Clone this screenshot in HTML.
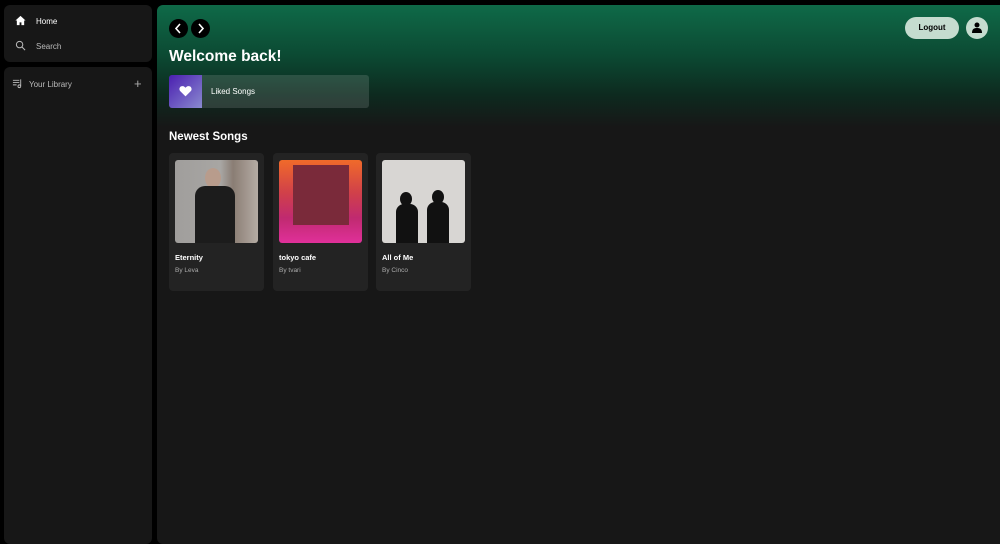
<!DOCTYPE html>
<html><head><style>
*{margin:0;padding:0;box-sizing:border-box}
body{width:1000px;height:544px;background:#000;font-family:"Liberation Sans",sans-serif;position:relative;overflow:hidden;color:#fff}
.box{position:absolute;background:#171717;border-radius:6px}
.nav{position:absolute;left:36px;font-size:8px;color:#fff}
.main{position:absolute;left:157px;top:5px;width:843px;height:539px;border-radius:6px 0 0 6px;background:linear-gradient(180deg,#0f6a48 0px,#0c4a33 50px,#0d2a1f 90px,#171717 122px,#171717 100%)}
.circ{position:absolute;width:19px;height:19px;border-radius:50%;background:#000}
.card{position:absolute;top:148px;width:95px;height:138px;background:#232323;border-radius:4px}
.img{position:absolute;left:6px;top:7px;width:83px;height:83px;border-radius:3px;overflow:hidden}
.t{position:absolute;left:6px;top:100px;font-size:7.5px;font-weight:bold}
.s{position:absolute;left:6px;top:114px;font-size:6.5px;color:#aaa}
</style></head><body>
<div class="box" style="left:4px;top:5px;width:148px;height:57px"></div>
<svg style="position:absolute;left:15px;top:15px" width="11" height="11" viewBox="0 0 24 24"><path d="M12 2L1 12h3v10h6v-6h4v6h6V12h3z" fill="#fff"/></svg>
<div class="nav" style="top:17px">Home</div>
<svg style="position:absolute;left:15px;top:40px" width="11" height="11" viewBox="0 0 24 24"><circle cx="10" cy="10" r="7" fill="none" stroke="#bbb" stroke-width="2.2"/><path d="M15 15l7 7" stroke="#bbb" stroke-width="2.2"/></svg>
<div class="nav" style="top:42px;color:#bbb">Search</div>
<div class="box" style="left:4px;top:67px;width:148px;height:477px"></div>
<svg style="position:absolute;left:12px;top:78px" width="11" height="11" viewBox="0 0 24 24" fill="none" stroke="#bbb" stroke-width="2"><path d="M2 5h14M2 10h14M2 15h8"/><path d="M19 3v14"/><circle cx="16" cy="18" r="3"/></svg>
<div class="nav" style="left:29px;top:80px;color:#bbb">Your Library</div>
<div style="position:absolute;left:134px;top:76px;font-size:13px;color:#aaa">+</div>
<div class="main"></div>
<div class="circ" style="left:169px;top:19px"></div>
<svg style="position:absolute;left:174px;top:23px" width="9" height="11" viewBox="0 0 9 11"><path d="M6 1L2 5.5 6 10" stroke="#fff" stroke-width="1.6" fill="none"/></svg>
<div class="circ" style="left:191px;top:19px"></div>
<svg style="position:absolute;left:197px;top:23px" width="9" height="11" viewBox="0 0 9 11"><path d="M2 1l4 4.5L2 10" stroke="#fff" stroke-width="1.6" fill="none"/></svg>
<div style="position:absolute;left:169px;top:48px;font-size:15.5px;font-weight:bold">Welcome back!</div>
<div style="position:absolute;left:169px;top:75px;width:200px;height:33px;background:rgba(255,255,255,0.13);border-radius:3px"></div>
<div style="position:absolute;left:169px;top:75px;width:33px;height:33px;background:linear-gradient(135deg,#4a1fb0,#8a8ad0);border-radius:3px 0 0 3px"></div>
<svg style="position:absolute;left:179px;top:85px" width="13" height="12" viewBox="0 0 24 22"><path d="M12 21L2 11C-1 7 2 1 7 2c2 0 4 2 5 3 1-1 3-3 5-3 5-1 8 5 5 9z" fill="#fff"/></svg>
<div style="position:absolute;left:211px;top:87px;font-size:8px">Liked Songs</div>
<div style="position:absolute;left:905px;top:17px;width:54px;height:22px;border-radius:11px;background:#c5dccf;color:#000;font-size:8px;font-weight:bold;text-align:center;line-height:22px">Logout</div>
<div style="position:absolute;left:966px;top:17px;width:22px;height:22px;border-radius:50%;background:#c5dccf"></div>
<svg style="position:absolute;left:972px;top:22px" width="10" height="11" viewBox="0 0 10 11"><circle cx="5" cy="3" r="2.5" fill="#000"/><path d="M0 11c0-4 2-5 5-5s5 1 5 5z" fill="#000"/></svg>
<div style="position:absolute;left:169px;top:131px;font-size:11.5px;font-weight:bold">Newest Songs</div>
<div class="card" style="left:169px;top:153px"><div class="img" style="background:linear-gradient(90deg,#a09e9c 0%,#a8a6a3 55%,#8a7d74 70%,#b5aca4 100%)">
<div style="position:absolute;left:30px;top:8px;width:16px;height:20px;border-radius:50%;background:#b89c8c"></div>
<div style="position:absolute;left:20px;top:26px;width:40px;height:60px;border-radius:10px 10px 0 0;background:#1c1c1c"></div>
</div><div class="t">Eternity</div><div class="s">By Leva</div></div>
<div class="card" style="left:273px;top:153px"><div class="img" style="background:linear-gradient(180deg,#f06a2a 0%,#d0404a 40%,#c02a70 70%,#e0309a 100%)">
<div style="position:absolute;left:14px;top:5px;width:56px;height:60px;background:#7a2a3a"></div>
</div><div class="t">tokyo cafe</div><div class="s">By tvari</div></div>
<div class="card" style="left:376px;top:153px"><div class="img" style="background:#d8d6d3">
<div style="position:absolute;left:18px;top:32px;width:12px;height:14px;border-radius:50%;background:#111"></div>
<div style="position:absolute;left:14px;top:44px;width:22px;height:40px;border-radius:8px 8px 0 0;background:#111"></div>
<div style="position:absolute;left:50px;top:30px;width:12px;height:14px;border-radius:50%;background:#111"></div>
<div style="position:absolute;left:45px;top:42px;width:22px;height:42px;border-radius:8px 8px 0 0;background:#111"></div>
</div><div class="t">All of Me</div><div class="s">By Cinco</div></div>
</body></html>
